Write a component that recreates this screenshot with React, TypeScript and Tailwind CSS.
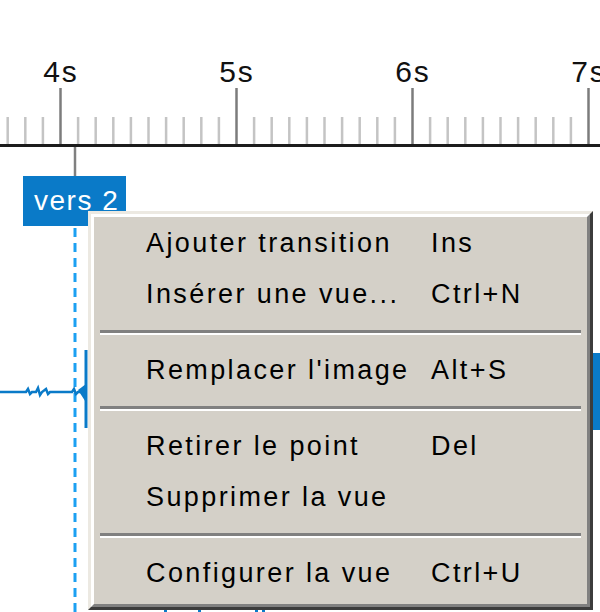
import React from 'react';

type Item = { label: string; shortcut?: string } | 'sep';

const items: Item[] = [
  { label: 'Ajouter transition', shortcut: 'Ins' },
  { label: 'Insérer une vue...', shortcut: 'Ctrl+N' },
  'sep',
  { label: "Remplacer l'image", shortcut: 'Alt+S' },
  'sep',
  { label: 'Retirer le point', shortcut: 'Del' },
  { label: 'Supprimer la vue' },
  'sep',
  { label: 'Configurer la vue', shortcut: 'Ctrl+U' },
];

const labels = [
  { text: '4s', x: 60 },
  { text: '5s', x: 236 },
  { text: '6s', x: 412 },
  { text: '7s', x: 588 },
];

function Ruler() {
  const minors: number[] = [];
  for (let i = -3; i < 32; i++) {
    if (i % 10 === 0) continue;
    minors.push(60.5 + i * 17.6);
  }
  return (
    <svg width="600" height="180" className="absolute left-0 top-0">
      {minors.map((x, i) => (
        <line key={i} x1={x} x2={x} y1={117} y2={144} stroke="#c4c4c4" strokeWidth={2.5} />
      ))}
      {labels.map(l => (
        <line key={l.text} x1={l.x + 0.5} x2={l.x + 0.5} y1={88} y2={145} stroke="#7c7c7c" strokeWidth={2.5} />
      ))}
      <line x1={0} x2={600} y1={145.5} y2={145.5} stroke="#1c1c1c" strokeWidth={3} />
      <line x1={75} x2={75} y1={147} y2={177} stroke="#808080" strokeWidth={2.5} />
    </svg>
  );
}

function Wave() {
  return (
    <svg width="600" height="612" className="absolute left-0 top-0">
      <line x1={75} x2={75} y1={228} y2={612} stroke="#1ca0f2" strokeWidth={3} strokeDasharray="9 6" />
      <polyline
        points="0,392 26,392 28,389 30,394 32,392 36,392 38,388 40,395 42,392 46,389 48,394 50,392 72,392 74,389 76,394 78,392 84,392"
        fill="none"
        stroke="#0a7ac8"
        strokeWidth={2.5}
      />
      <line x1={86} x2={86} y1={350} y2={428} stroke="#0a7ac8" strokeWidth={3} />
      <polygon points="78,390 86,384 87,404" fill="#0a7ac8" />
      <rect x={588} y={353} width={12} height={77} fill="#0a7ac8" />
      <rect x={164} y={606} width={3} height={6} fill="#0a7ac8" />
      <rect x={198} y={604} width={3} height={8} fill="#0a7ac8" />
      <rect x={255} y={602} width={3} height={10} fill="#0a7ac8" />
      <rect x={262} y={604} width={3} height={8} fill="#0a7ac8" />
    </svg>
  );
}

function Menu() {
  return (
    <div className="absolute left-[88px] top-[211px] w-[505px] h-[399px] border-[3px] border-t-[#ece9e2] border-l-[#ece9e2] border-r-[#3c3c3c] border-b-[#3c3c3c]">
      <div className="h-full border-[3px] border-t-white border-l-white border-r-[#808080] border-b-[#808080] bg-[#d4d0c8] pt-[1px]">
        {items.map((it, i) =>
          it === 'sep' ? (
            <div key={i} className="h-[25px] flex flex-col justify-center px-[6px]">
              <div className="h-[2.5px] bg-[#808080]" />
              <div className="h-[2.5px] bg-white" />
            </div>
          ) : (
            <div key={i} className="h-[51px] flex items-center pl-[52px] text-[27px] tracking-[2.4px] text-black">
              <span className="w-[285px] whitespace-nowrap">{it.label}</span>
              <span>{it.shortcut}</span>
            </div>
          )
        )}
      </div>
    </div>
  );
}

export default function App() {
  return (
    <div className="relative w-[600px] h-[612px] overflow-hidden bg-white font-['Liberation_Sans',Arial,sans-serif]">
      <Ruler />
      {labels.map(l => (
        <div
          key={l.text}
          className="absolute top-[54px] w-[40px] -ml-[19px] text-center text-[30px] leading-[36px] tracking-[2px] text-[#111]"
          style={{ left: l.x }}
        >
          {l.text}
        </div>
      ))}
      <Wave />
      <div className="absolute left-[23px] top-[176px] w-[103px] h-[50px] bg-[#0a7ac8] text-white text-[28px] leading-[50px] pl-[11px] tracking-[1.5px] whitespace-nowrap">
        vers 2
      </div>
      <Menu />
    </div>
  );
}
